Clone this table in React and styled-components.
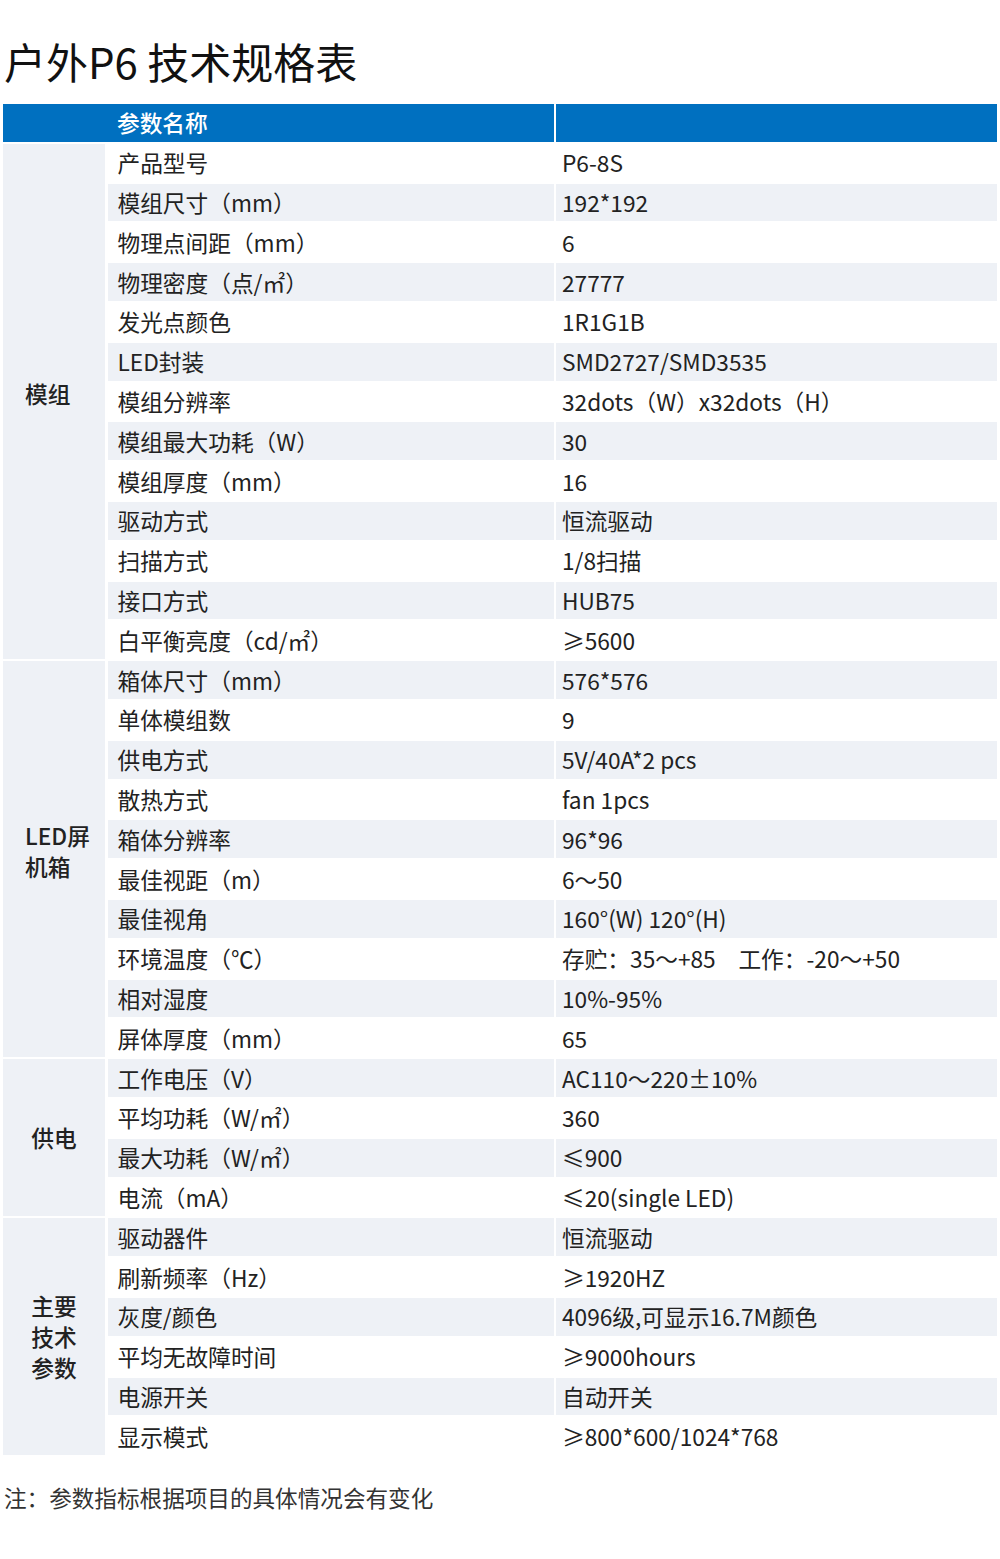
import React from "react";
import styled, { createGlobalStyle } from "styled-components";

const GlobalStyle = createGlobalStyle`
  body {
    margin: 0;
    background: #ffffff;
    font-family: "Noto Sans CJK SC", "Noto Sans", sans-serif;
    color: #222222;
  }
`;

const Page = styled.div`
  width: 1000px;
  padding: 36px 3px 40px;
  box-sizing: border-box;
`;

const Title = styled.h1`
  margin: 0 0 18px 1px;
  font-size: 42px;
  line-height: 50px;
  font-weight: 400;
  color: #111111;
`;

const Table = styled.div`
  display: grid;
  grid-template-columns: 102px 446px 1fr;
  grid-auto-rows: 37.8px;
  column-gap: 2.5px;
  row-gap: 2px;
  width: 994px;
`;

const HeaderCell = styled.div`
  grid-column: ${(p) => p.$span};
  background: #0070c0;
  color: #ffffff;
  font-size: 22.7px;
  font-weight: 500;
  display: flex;
  align-items: center;
  padding-left: ${(p) => p.$indent}px;
`;

const GroupLabel = styled.div`
  grid-column: 1;
  grid-row: span ${(p) => p.$rows};
  background: #eef1f6;
  display: flex;
  align-items: center;
  justify-content: ${(p) => (p.$center ? "center" : "flex-start")};
  padding: ${(p) => (p.$center ? "0 26px" : "0 12px 16px 22px")};
  font-size: 22.7px;
  font-weight: 500;
  line-height: 31px;
  color: #222222;
  text-align: ${(p) => (p.$center ? "center" : "left")};
  box-sizing: border-box;
`;

const Cell = styled.div`
  background: ${(p) => (p.$shaded ? "#eef1f6" : "#ffffff")};
  display: flex;
  align-items: center;
  padding-left: ${(p) => p.$indent}px;
  font-size: 22.7px;
  color: #222222;
  white-space: nowrap;
`;

const Note = styled.p`
  margin: 28px 0 0 1px;
  font-size: 22.6px;
  line-height: 30px;
  color: #333333;
`;

const groups = [
  {
    label: "模组",
    center: false,
    rows: [
      ["产品型号", "P6-8S"],
      ["模组尺寸（mm）", "192*192"],
      ["物理点间距（mm）", "6"],
      ["物理密度（点/㎡）", "27777"],
      ["发光点颜色", "1R1G1B"],
      ["LED封装", "SMD2727/SMD3535"],
      ["模组分辨率", "32dots（W）x32dots（H）"],
      ["模组最大功耗（W）", "30"],
      ["模组厚度（mm）", "16"],
      ["驱动方式", "恒流驱动"],
      ["扫描方式", "1/8扫描"],
      ["接口方式", "HUB75"],
      ["白平衡亮度（cd/㎡）", "≥5600"],
    ],
  },
  {
    label: "LED屏机箱",
    center: false,
    rows: [
      ["箱体尺寸（mm）", "576*576"],
      ["单体模组数", "9"],
      ["供电方式", "5V/40A*2 pcs"],
      ["散热方式", "fan 1pcs"],
      ["箱体分辨率", "96*96"],
      ["最佳视距（m）", "6～50"],
      ["最佳视角", "160°(W) 120°(H)"],
      ["环境温度（℃）", "存贮：35～+85　工作：-20～+50"],
      ["相对湿度", "10%-95%"],
      ["屏体厚度（mm）", "65"],
    ],
  },
  {
    label: "供电",
    center: true,
    rows: [
      ["工作电压（V）", "AC110～220±10%"],
      ["平均功耗（W/㎡）", "360"],
      ["最大功耗（W/㎡）", "≤900"],
      ["电流（mA）", "≤20(single LED)"],
    ],
  },
  {
    label: "主要技术参数",
    center: true,
    rows: [
      ["驱动器件", "恒流驱动"],
      ["刷新频率（Hz）", "≥1920HZ"],
      ["灰度/颜色", "4096级,可显示16.7M颜色"],
      ["平均无故障时间", "≥9000hours"],
      ["电源开关", "自动开关"],
      ["显示模式", "≥800*600/1024*768"],
    ],
  },
];

export default function App() {
  let index = 0;
  return (
    <Page>
      <GlobalStyle />
      <Title>户外P6 技术规格表</Title>
      <Table>
        <HeaderCell $span="1 / 3" $indent={114}>参数名称</HeaderCell>
        <HeaderCell $span="3" $indent={6} />
        {groups.map((group) => (
          <React.Fragment key={group.label}>
            <GroupLabel $rows={group.rows.length} $center={group.center}>
              {group.label}
            </GroupLabel>
            {group.rows.map(([name, value]) => {
              const shaded = index++ % 2 === 1;
              return (
                <React.Fragment key={name}>
                  <Cell $shaded={shaded} $indent={10}>{name}</Cell>
                  <Cell $shaded={shaded} $indent={6}>{value}</Cell>
                </React.Fragment>
              );
            })}
          </React.Fragment>
        ))}
      </Table>
      <Note>注：参数指标根据项目的具体情况会有变化</Note>
    </Page>
  );
}
